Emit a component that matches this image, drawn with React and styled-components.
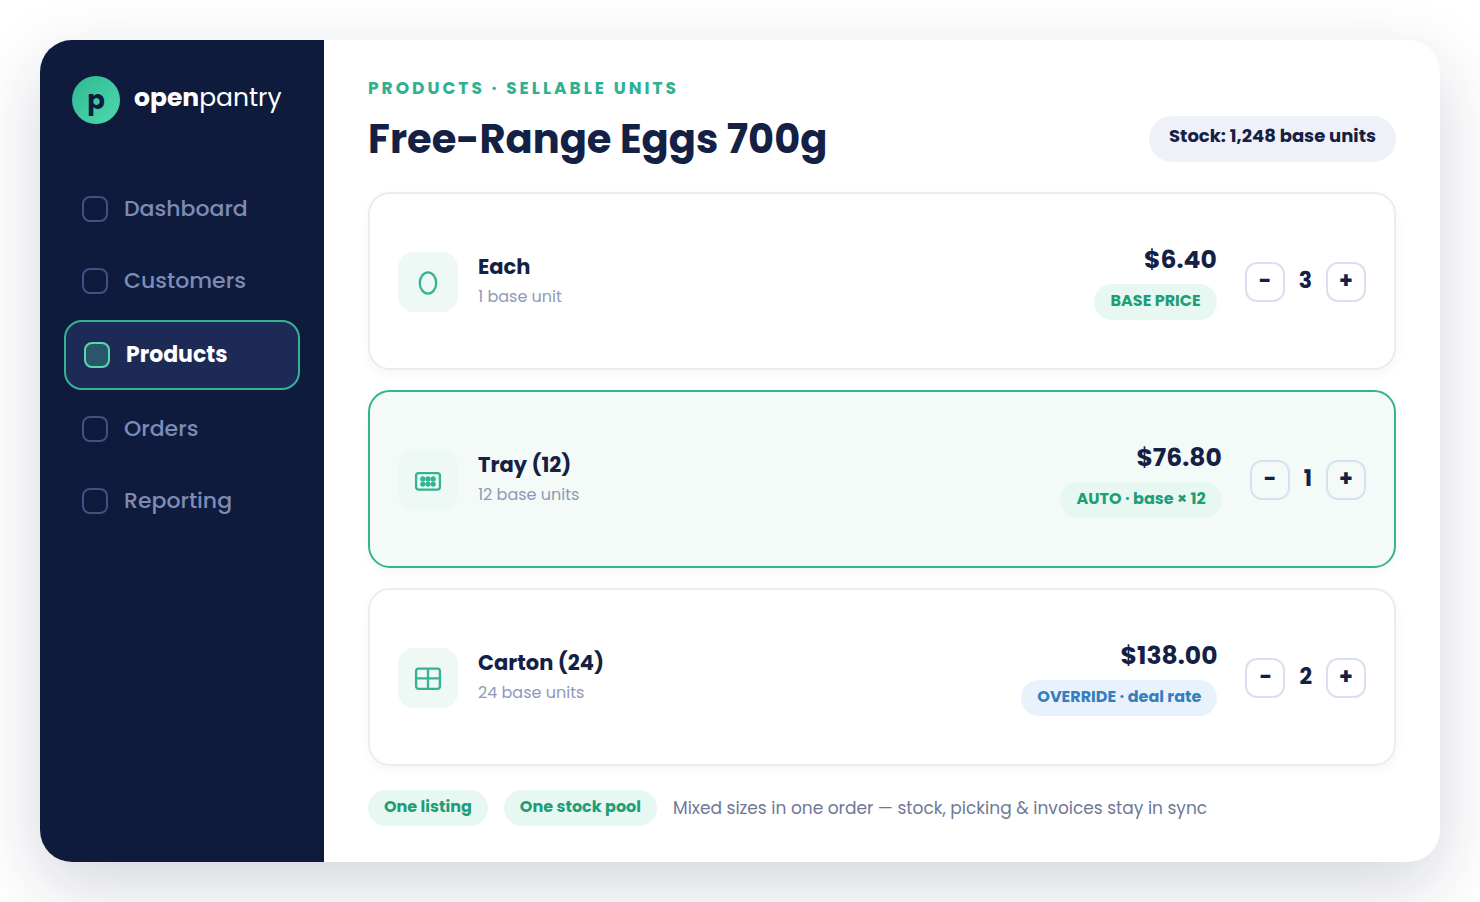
import React, { useState } from "react";
import styled, { createGlobalStyle } from "styled-components";

const navItems = ["Dashboard", "Customers", "Products", "Orders", "Reporting"];

const units = [
  {
    id: "each",
    name: "Each",
    detail: "1 base unit",
    price: "$6.40",
    tag: "BASE PRICE",
    tone: "green",
    qty: 3,
  },
  {
    id: "tray",
    name: "Tray (12)",
    detail: "12 base units",
    price: "$76.80",
    tag: "AUTO · base × 12",
    tone: "green",
    qty: 1,
  },
  {
    id: "carton",
    name: "Carton (24)",
    detail: "24 base units",
    price: "$138.00",
    tag: "OVERRIDE · deal rate",
    tone: "blue",
    qty: 2,
  },
];

const UnitIcon = ({ id }) => (
  <svg
    width="30"
    height="30"
    viewBox="0 0 30 30"
    fill="none"
    stroke="currentColor"
    strokeWidth="2.3"
    aria-hidden="true"
  >
    {id === "each" && <ellipse cx="15" cy="16" rx="8.2" ry="10.6" />}
    {id === "tray" && (
      <>
        <rect x="3.1" y="8.2" width="23.8" height="16.4" rx="2.5" />
        <g fill="currentColor" stroke="none">
          {[9.8, 15, 20.2].map(x => (
            <React.Fragment key={x}>
              <circle cx={x} cy="13.9" r="2.6" />
              <circle cx={x} cy="19.1" r="2.6" />
            </React.Fragment>
          ))}
        </g>
      </>
    )}
    {id === "carton" && (
      <>
        <rect x="3.1" y="5.6" width="23.8" height="20.2" rx="2.5" />
        <path d="M15 5.6v20.2M3.1 15.4h23.8" />
      </>
    )}
  </svg>
);

const UnitCard = ({ unit, selected }) => {
  const [qty, setQty] = useState(unit.qty);

  return (
    <Card $selected={selected}>
      <IconTile>
        <UnitIcon id={unit.id} />
      </IconTile>
      <Info>
        <h2>{unit.name}</h2>
        <p>{unit.detail}</p>
      </Info>
      <PriceBox>
        <strong>{unit.price}</strong>
        <Pill $tone={unit.tone}>{unit.tag}</Pill>
      </PriceBox>
      <Stepper>
        <StepButton
          type="button"
          aria-label={`Remove one ${unit.name}`}
          onClick={() => setQty(Math.max(0, qty - 1))}
        >
          −
        </StepButton>
        <output>{qty}</output>
        <StepButton
          type="button"
          aria-label={`Add one ${unit.name}`}
          onClick={() => setQty(qty + 1)}
        >
          +
        </StepButton>
      </Stepper>
    </Card>
  );
};

export default function App() {
  const [active, setActive] = useState("Products");

  return (
    <>
      <GlobalStyle />
      <Page>
        <Sidebar>
          <Brand href="#">
            <Logo>p</Logo>
            <BrandName>
              <b>open</b>pantry
            </BrandName>
          </Brand>
          <Nav>
            {navItems.map(item => (
              <NavLink
                key={item}
                href={`#${item.toLowerCase()}`}
                $active={item === active}
                aria-current={item === active ? "page" : undefined}
                onClick={() => setActive(item)}
              >
                <NavBox $active={item === active} />
                {item}
              </NavLink>
            ))}
          </Nav>
        </Sidebar>
        <Main>
          <Eyebrow>PRODUCTS · SELLABLE UNITS</Eyebrow>
          <Header>
            <h1>Free-Range Eggs 700g</h1>
            <Stock>Stock: 1,248 base units</Stock>
          </Header>
          <Cards>
            {units.map(unit => (
              <UnitCard
                key={unit.id}
                unit={unit}
                selected={unit.id === "tray"}
              />
            ))}
          </Cards>
          <Footer>
            <Pill $tone="green">One listing</Pill>
            <Pill $tone="green">One stock pool</Pill>
            <p>Mixed sizes in one order — stock, picking & invoices stay in sync</p>
          </Footer>
        </Main>
      </Page>
    </>
  );
}

const GlobalStyle = createGlobalStyle`
  *, *::before, *::after {
    box-sizing: border-box;
  }
  body {
    margin: 0;
    background: #ffffff;
    color: #142044;
    font-family: Poppins, Inter, "Liberation Sans", sans-serif;
  }
  h1, h2, p {
    margin: 0;
  }
  a {
    color: inherit;
    text-decoration: none;
  }
`;

const Page = styled.div`
  display: flex;
  min-height: calc(100vh - 80px);
  margin: 40px;
  border-radius: 32px;
  overflow: hidden;
  background: #ffffff;
  box-shadow: 0 24px 70px rgba(14, 27, 61, 0.18);
`;

const Sidebar = styled.aside`
  flex: none;
  width: 284px;
  padding: 36px 24px;
  background: #0e1b3d;
`;

const Brand = styled.a`
  display: flex;
  align-items: center;
  gap: 14px;
  padding: 0 8px;
  color: #ffffff;
  line-height: 44px;
`;

const BrandName = styled.span`
  padding-bottom: 4px;
  font-size: 25px;
`;

const Logo = styled.span`
  display: grid;
  place-items: center;
  width: 48px;
  height: 48px;
  border-radius: 50%;
  background: linear-gradient(135deg, #2fb894, #4fd9ae);
  color: #0e1b3d;
  font-size: 26px;
  font-weight: 700;
`;

const Nav = styled.nav`
  display: grid;
  gap: 6px;
  margin-top: 52px;
`;

const NavLink = styled.a`
  display: flex;
  align-items: center;
  gap: 16px;
  padding: 18px;
  border: ${p => (p.$active ? "2px solid #34b393" : "0")};
  border-radius: 18px;
  background: ${p => (p.$active ? "#1c2a55" : "transparent")};
  color: ${p => (p.$active ? "#ffffff" : "#7d8bb5")};
  font-size: 22px;
  font-weight: ${p => (p.$active ? 700 : 500)};
  line-height: 30px;
`;

const NavBox = styled.span`
  width: 26px;
  height: 26px;
  border: 2px solid ${p => (p.$active ? "#54d9b2" : "#435081")};
  border-radius: 8px;
  background: ${p => (p.$active ? "#2a566a" : "transparent")};
`;

const Main = styled.main`
  flex: 1;
  min-width: 0;
  display: flex;
  flex-direction: column;
  padding: 36px 44px;
`;

const Eyebrow = styled.p`
  margin-bottom: 16px;
  color: #2fb08f;
  font-size: 17px;
  font-weight: 700;
  letter-spacing: 3px;
  line-height: 24px;
`;

const Header = styled.header`
  display: flex;
  align-items: center;
  justify-content: space-between;
  gap: 24px;
  margin-bottom: 30px;
  h1 {
    font-size: 40px;
    font-weight: 700;
    line-height: 44px;
  }
`;

const Stock = styled.span`
  padding: 6px 20px 12px;
  border-radius: 23px;
  background: #eef1f8;
  font-size: 18px;
  font-weight: 700;
  line-height: 28px;
  white-space: nowrap;
`;

const Cards = styled.div`
  flex: 1;
  display: grid;
  grid-auto-rows: 1fr;
  gap: 20px;
`;

const Card = styled.section`
  display: flex;
  align-items: center;
  padding: 2px 28px 0;
  border: 2px solid ${p => (p.$selected ? "#34b393" : "#e8ecf5")};
  border-radius: 22px;
  background: ${p => (p.$selected ? "#f4faf8" : "#ffffff")};
  box-shadow: 0 4px 12px rgba(14, 27, 61, 0.04);
`;

const IconTile = styled.span`
  flex: none;
  display: grid;
  place-items: center;
  width: 60px;
  height: 60px;
  margin-right: 20px;
  border-radius: 16px;
  background: #eef8f5;
  color: #34b393;
`;

const Info = styled.div`
  flex: 1;
  h2 {
    font-size: 21px;
    font-weight: 700;
    line-height: 30px;
  }
  p {
    color: #8d99b8;
    font-size: 16px;
    line-height: 30px;
  }
`;

const PriceBox = styled.div`
  display: flex;
  flex-direction: column;
  align-items: flex-end;
  gap: 8px;
  margin-right: 28px;
  strong {
    font-size: 25px;
    font-weight: 700;
    line-height: 32px;
  }
`;

const Pill = styled.span`
  padding: 5px 16px 7px;
  border-radius: 18px;
  background: ${p => (p.$tone === "blue" ? "#e8f2fd" : "#e7f8f2")};
  color: ${p => (p.$tone === "blue" ? "#337fbd" : "#1f9d76")};
  font-size: 16px;
  font-weight: 700;
  line-height: 24px;
  white-space: nowrap;
`;

const Stepper = styled.div`
  display: flex;
  align-items: center;
  gap: 14px;
  output {
    padding-bottom: 2px;
    font-size: 22px;
    font-weight: 700;
    line-height: 28px;
  }
`;

const StepButton = styled.button`
  width: 40px;
  height: 40px;
  padding: 0 0 2px;
  border: 2px solid #d9e1ef;
  border-radius: 12px;
  background: transparent;
  color: inherit;
  font-family: inherit;
  font-size: 22px;
  font-weight: 700;
  line-height: 28px;
  cursor: pointer;
`;

const Footer = styled.footer`
  display: flex;
  align-items: center;
  gap: 16px;
  margin-top: 24px;
  p {
    color: #6e7896;
    font-size: 17px;
    line-height: 28px;
  }
`;
